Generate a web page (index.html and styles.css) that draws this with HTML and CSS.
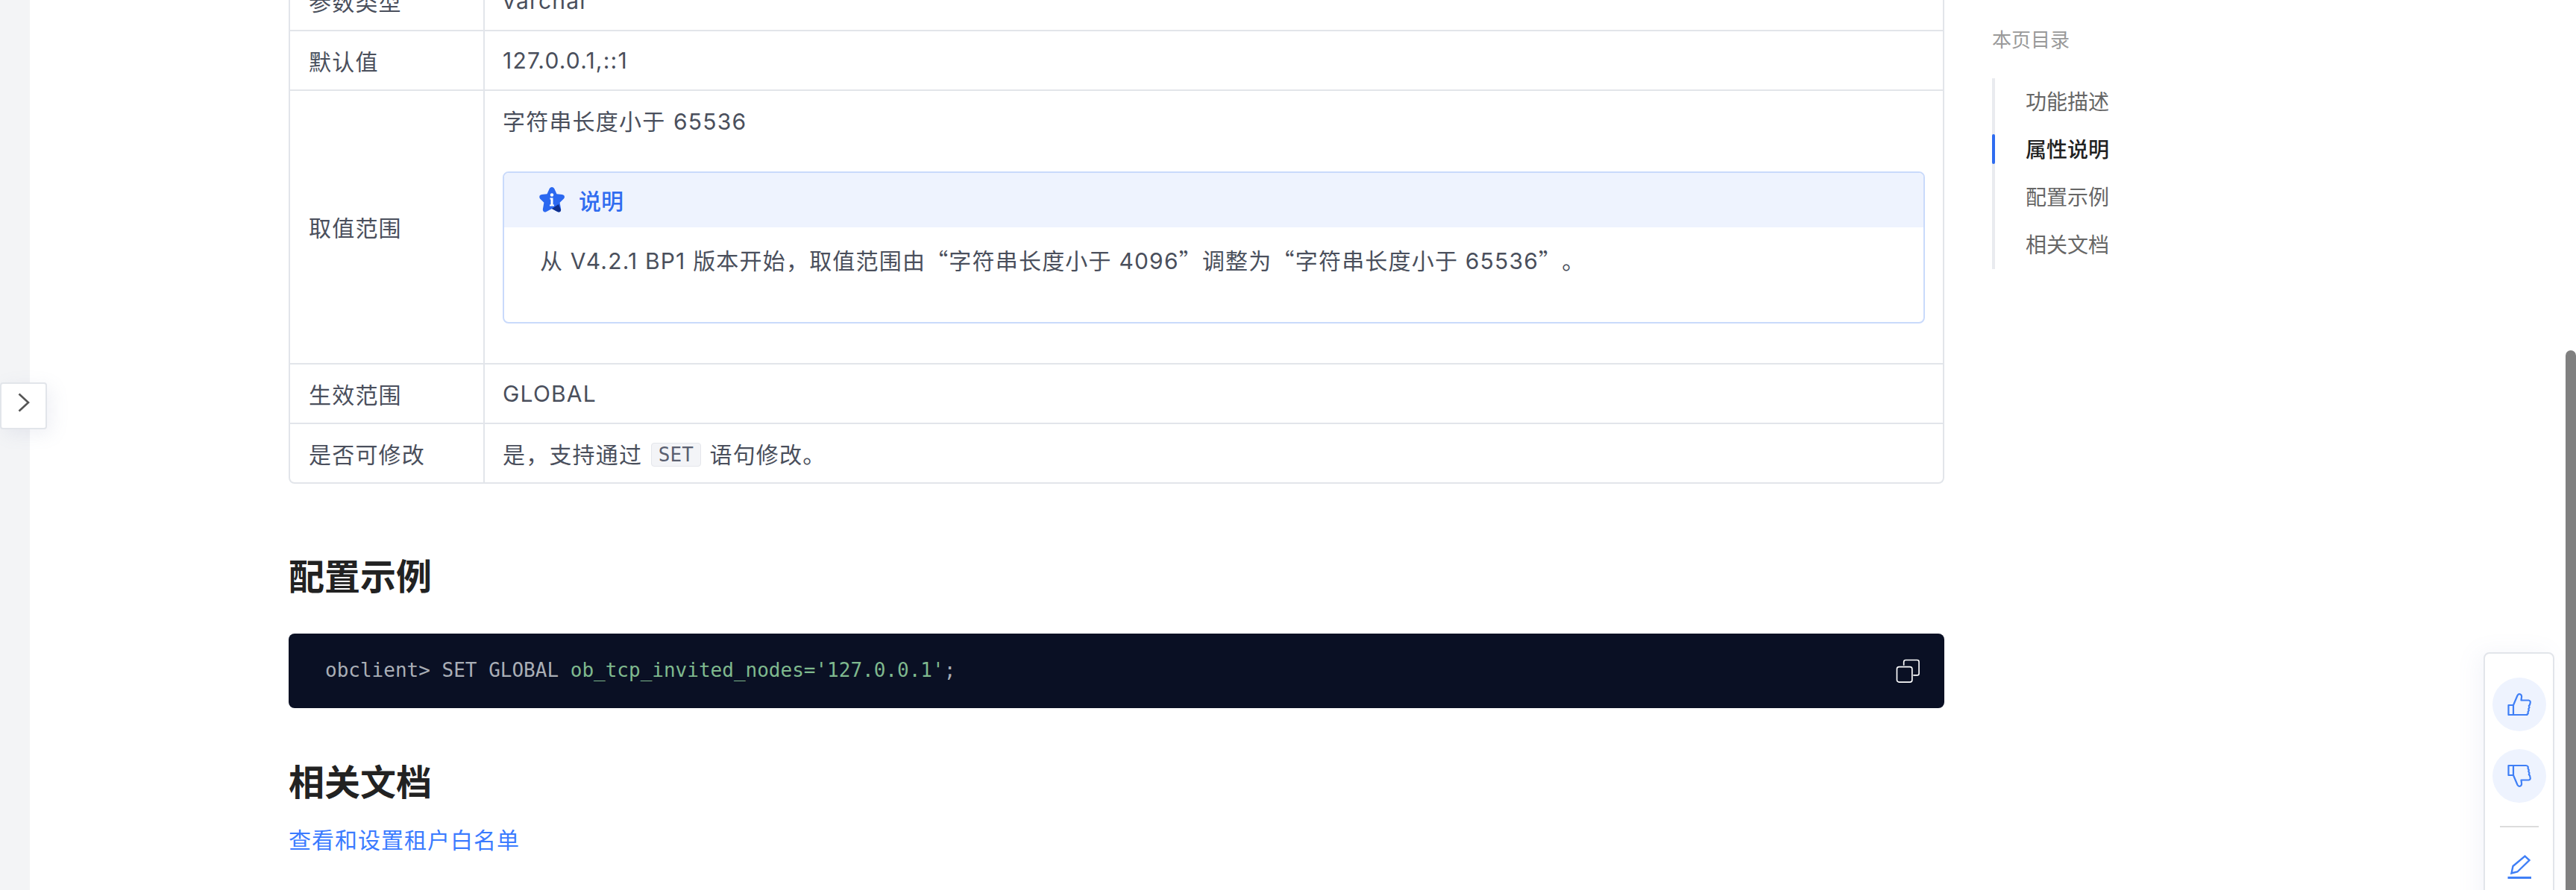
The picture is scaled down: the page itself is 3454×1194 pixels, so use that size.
FILE: index.html
```html
<!DOCTYPE html>
<html lang="zh-CN">
<head>
<meta charset="utf-8">
<title>ob_tcp_invited_nodes</title>
<link rel="stylesheet" href="styles.css">
</head>
<body>
<div class="page">
  <div class="rail"></div>
  <main class="article">
    <table class="props">
      <colgroup><col class="col-key"><col></colgroup>
      <tr class="row"><td class="key">参数类型</td><td class="val">varchar</td></tr>
      <tr class="row"><td class="key">默认值</td><td class="val">127.0.0.1,::1</td></tr>
      <tr>
        <td class="key key-mid">取值范围</td>
        <td class="val val-top">
          <p class="line">字符串长度小于 65536</p>
          <div class="note">
            <div class="note-head">
              <svg class="star" viewBox="0 0 36 36" aria-hidden="true">
                <path d="M18 1c1.600 0 2.800 1 3.500 2.600l3 6.600 7.200.9c3.200.4 4.300 3.400 2.100 5.600l-5.200 5 1.500 8.800c.5 3.300-1.900 5-4.700 3.500L18 30l-7.400 4c-2.800 1.500-5.200-.2-4.700-3.500l1.500-8.800-5.200-5C.5 14.500 1.100 11.500 4.300 11.100l7.200-.9 3-6.600C15.200 2 16.400 1 18 1z" fill="#2b68f0"/>
                <path d="M18 30L27 24L30 31.500c.3 2.500-2 3.700-4.600 2.500z" fill="#0f2f8c"/>
                <circle cx="18" cy="11.500" r="2.200" fill="#fff"/>
                <path d="M15.500 15.500h4v9h1.500v2h-6v-2h1.500v-7h-1z" fill="#fff"/>
              </svg>
              <span class="note-title">说明</span>
            </div>
            <p class="note-body">从 V4.2.1 BP1 版本开始，取值范围由<span class="cjk">“</span>字符串长度小于 4096<span class="cjk">”</span>调整为<span class="cjk">“</span>字符串长度小于 65536<span class="cjk">”</span>。</p>
          </div>
        </td>
      </tr>
      <tr class="row"><td class="key">生效范围</td><td class="val">GLOBAL</td></tr>
      <tr class="row last"><td class="key">是否可修改</td><td class="val">是，支持通过 <code class="chip">SET</code> 语句修改。</td></tr>
    </table>

    <h2 class="heading first">配置示例</h2>
    <div class="code">
      <pre class="code-text">obclient&gt; SET GLOBAL <span class="str">ob_tcp_invited_nodes='127.0.0.1'</span>;</pre>
      <svg class="copy" viewBox="0 0 34 34" aria-hidden="true">
        <path d="M11 9V4a2.500 2.500 0 0 1 2.500-2.500h16A2.500 2.500 0 0 1 32 4v16a2.500 2.500 0 0 1-2.500 2.500H24" fill="none" stroke="#fff" stroke-width="1.700"/>
        <rect x="1.500" y="11" width="21" height="21" rx="3" fill="none" stroke="#fff" stroke-width="1.700"/>
      </svg>
    </div>

    <h2 class="heading second">相关文档</h2>
    <a class="link" href="#">查看和设置租户白名单</a>
  </main>

  <nav class="toc">
    <div class="toc-title">本页目录</div>
    <ul class="toc-list">
      <li class="toc-item">功能描述</li>
      <li class="toc-item active">属性说明</li>
      <li class="toc-item">配置示例</li>
      <li class="toc-item">相关文档</li>
    </ul>
  </nav>
</div>

<button class="collapse" aria-label="展开">
  <svg viewBox="0 0 16 26" class="chev" aria-hidden="true"><path d="M1.500 1.500L14 13 1.500 24.500" fill="none" stroke="#555" stroke-width="2.600"/></svg>
</button>

<aside class="feedback">
  <span class="fb-btn">
    <svg class="thumb" viewBox="0 0 32 32" aria-hidden="true">
      <path d="M8 17L13.500 4Q15 1.500 17.500 2.500Q19.500 3.500 19 6.500L18.500 10.500H28.500Q31.500 11 30.500 14.500L30 16.500L28.800 18L29.500 20L28.300 22L28.800 24L27.600 26L27.800 28Q27 30 25 30H1.500V17H8V30" fill="none" stroke="#3f7ff6" stroke-width="2.200" stroke-linejoin="round"/>
    </svg>
  </span>
  <span class="fb-btn">
    <svg class="thumb" viewBox="0 0 32 32" aria-hidden="true">
      <path d="M8 15L13.500 28Q15 30.500 17.500 29.500Q19.500 28.500 19 25.500L18.500 21.500H28.500Q31.500 21 30.500 17.500L30 15.500L28.800 14L29.500 12L28.300 10L28.800 8L27.600 6L27.800 4Q27 2 25 2H1.500V15H8V2" fill="none" stroke="#3f7ff6" stroke-width="2.200" stroke-linejoin="round"/>
    </svg>
  </span>
  <span class="fb-rule"></span>
  <svg class="pencil" viewBox="0 0 32 34" aria-hidden="true">
    <path d="M5.500 25.500L7.500 16L23.500 2.500L29.500 8L13.500 23.500z" fill="none" stroke="#3f7ff6" stroke-width="2.400"/>
    <path d="M0.500 31.500H32" stroke="#3f7ff6" stroke-width="3" fill="none"/>
  </svg>
</aside>

<div class="scrollbar"></div>
</body>
</html>
```

FILE: styles.css
```css
* { box-sizing: border-box; }
html, body { margin: 0; height: 100%; overflow: hidden; background: #fff; }
body {
  font-family: "Inter", "Noto Sans CJK SC", sans-serif;
  color: #4a4f5c;
  font-size: 30px;
  letter-spacing: 1.2px;
  text-spacing-trim: space-all;
}
.page { display: flex; height: 1194px; overflow: hidden; }
.rail { width: 40px; flex: none; background: #f3f4f6; }

.article { width: 2220px; margin-left: 347px; flex: none; margin-top: -38px; }

.props {
  width: 2220px;
  table-layout: fixed;
  border-collapse: separate;
  border-spacing: 0;
  border: 2px solid #e2e5ea;
  border-top: 0;
  border-radius: 0 0 8px 8px;
}
.col-key { width: 261px; }
.props td { border-bottom: 2px solid #e2e5ea; padding: 0 24px; }
.props td.key { padding-left: 25px; }
.props tr:last-child td { border-bottom: 0; }
.row td { height: 80px; }
.row.last td { height: 78px; }
.key { border-right: 2px solid #e2e5ea; }
.props td.key-mid { padding-bottom: 2px; }
.props td.val-top { padding-top: 18px; padding-bottom: 53px; }
.line { margin: 0 0 44px; line-height: 46px; word-spacing: 1px; }

.note { border: 2px solid #c9dafb; border-radius: 8px; height: 204px; overflow: hidden; }
.note-head {
  display: flex; align-items: center; gap: 18px;
  height: 73px; padding: 0 0 2px 46px;
  background: #eef3fe;
}
.star { width: 36px; height: 36px; }
.note-title { color: #2f6cf0; font-weight: 500; letter-spacing: 0; }
.note-body { margin: 20px 0 0 48px; line-height: 46px; }
.cjk { font-family: "Noto Sans CJK SC", sans-serif; }

.chip {
  display: inline-block;
  font-family: "DejaVu Sans Mono", monospace;
  font-size: 26px;
  letter-spacing: 0;
  line-height: 30px;
  padding: 0 9px;
  margin: 0 2px;
  color: #5a6070;
  background: #f3f4f7;
  border: 1px solid #e4e6eb;
  border-radius: 4px;
  vertical-align: 2px;
}

.heading { margin: 0; color: #222; font-size: 48px; font-weight: 700; letter-spacing: 0; line-height: 64px; }
.heading.first { margin-top: 93px; }
.heading.second { margin-top: 68px; }

.code {
  display: flex; align-items: center; justify-content: space-between;
  height: 100px; margin-top: 44px;
  padding: 0 32px 0 49px;
  background: #0a1024;
  border-radius: 8px;
}
.code-text {
  margin: 0 0 3px;
  font-family: "DejaVu Sans Mono", monospace;
  font-size: 26px;
  letter-spacing: 0;
  color: #a9aeb6;
}
.str { color: #7fb98e; }
.copy { width: 33px; height: 33px; }

.link { display: block; margin-top: 22px; color: #3b7bff; text-decoration: none; line-height: 46px; letter-spacing: 1px; }

.toc { margin-left: 64px; padding-top: 36px; font-size: 28px; letter-spacing: 0; }
.toc-title { font-size: 26px; color: #999; line-height: 36px; }
.toc-list {
  list-style: none; margin: 33px 0 0; padding: 0;
  border-left: 4px solid #e9ebef;
  width: 240px;
  height: 256px;
}
.toc-item { height: 64px; line-height: 64px; padding-left: 41px; color: #666; margin-top: 0; position: relative; }
.toc-item.active { color: #222; font-weight: 500; }
.toc-item.active::before {
  content: ""; position: absolute; left: -4px; top: 11px;
  width: 4px; height: 40px; border-radius: 2px; background: #2f6cf0;
}

.collapse {
  position: absolute; left: 0; top: 513px;
  width: 63px; height: 63px; padding: 0;
  background: #fff;
  border: 2px solid #e2e5ea; border-radius: 4px;
  box-shadow: 6px 6px 24px rgba(120,130,170,.12);
  display: flex; align-items: flex-start; justify-content: center;
}
.chev { width: 16px; height: 26px; margin-top: 12px; }

.feedback {
  position: absolute; left: 3330px; top: 875px;
  width: 95px; height: 360px;
  background: #fff;
  border: 2px solid #e2e5ea; border-radius: 8px;
  box-shadow: -8px 0 30px rgba(120,130,190,.08);
  display: flex; flex-direction: column; align-items: center;
  padding-top: 32px;
}
.fb-btn {
  width: 72px; height: 72px; border-radius: 50%; flex: none;
  background: #eef3fe;
  display: flex; align-items: center; justify-content: center;
  margin-bottom: 24px;
}
.thumb { width: 32px; height: 32px; }
.fb-rule { width: 52px; height: 2px; background: #dcdcdc; margin: 7px 0 36px; flex: none; }
.pencil { width: 32px; height: 34px; flex: none; }

.scrollbar {
  position: absolute; left: 3440px; top: 470px;
  width: 14px; height: 724px;
  background: #808080;
  border-radius: 7px 7px 0 0;
}
```
